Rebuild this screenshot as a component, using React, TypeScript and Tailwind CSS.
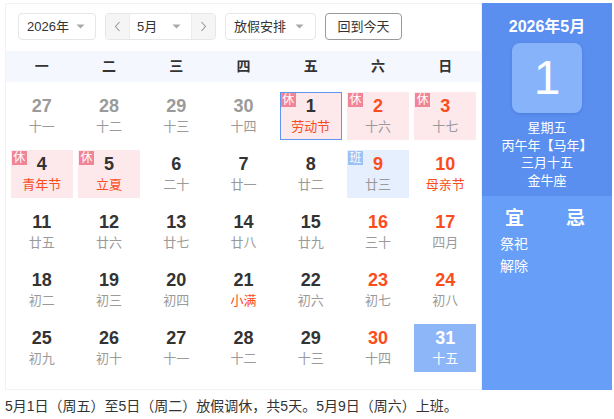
type Day = {
  n: number;
  sub: string;
  muted?: boolean;
  redNum?: boolean;
  redSub?: boolean;
  tag?: '休' | '班';
  selected?: boolean;
  today?: boolean;
};

const rows: Day[][] = [
  [
    { n: 27, sub: '十一', muted: true },
    { n: 28, sub: '十二', muted: true },
    { n: 29, sub: '十三', muted: true },
    { n: 30, sub: '十四', muted: true },
    { n: 1, sub: '劳动节', redSub: true, tag: '休', selected: true },
    { n: 2, sub: '十六', redNum: true, tag: '休' },
    { n: 3, sub: '十七', redNum: true, tag: '休' },
  ],
  [
    { n: 4, sub: '青年节', redSub: true, tag: '休' },
    { n: 5, sub: '立夏', redSub: true, tag: '休' },
    { n: 6, sub: '二十' },
    { n: 7, sub: '廿一' },
    { n: 8, sub: '廿二' },
    { n: 9, sub: '廿三', redNum: true, tag: '班' },
    { n: 10, sub: '母亲节', redNum: true, redSub: true },
  ],
  [
    { n: 11, sub: '廿五' },
    { n: 12, sub: '廿六' },
    { n: 13, sub: '廿七' },
    { n: 14, sub: '廿八' },
    { n: 15, sub: '廿九' },
    { n: 16, sub: '三十', redNum: true },
    { n: 17, sub: '四月', redNum: true },
  ],
  [
    { n: 18, sub: '初二' },
    { n: 19, sub: '初三' },
    { n: 20, sub: '初四' },
    { n: 21, sub: '小满', redSub: true },
    { n: 22, sub: '初六' },
    { n: 23, sub: '初七', redNum: true },
    { n: 24, sub: '初八', redNum: true },
  ],
  [
    { n: 25, sub: '初九' },
    { n: 26, sub: '初十' },
    { n: 27, sub: '十一' },
    { n: 28, sub: '十二' },
    { n: 29, sub: '十三' },
    { n: 30, sub: '十四', redNum: true },
    { n: 31, sub: '十五', today: true },
  ],
];

const weekdays = ['一', '二', '三', '四', '五', '六', '日'];

function Caret() {
  return (
    <svg width="9" height="5" viewBox="0 0 9 5" className="shrink-0">
      <path d="M0.5 0.5 L8.5 0.5 L4.5 4.5 Z" fill="#a8a8a8" />
    </svg>
  );
}

function Chevron({ dir }: { dir: 'l' | 'r' }) {
  return (
    <svg width="7" height="11" viewBox="0 0 7 11">
      <path
        d={dir === 'l' ? 'M5.5 1 L1.5 5.5 L5.5 10' : 'M1.5 1 L5.5 5.5 L1.5 10'}
        fill="none"
        stroke="#9a9a9a"
        strokeWidth="1.1"
      />
    </svg>
  );
}

function Cell({ d }: { d: Day }) {
  const bg = d.today
    ? 'bg-[#8db6f9]'
    : d.tag === '休'
      ? 'bg-[#fde8ec]'
      : d.tag === '班'
        ? 'bg-[#e6effd]'
        : '';
  const border = d.selected ? 'border-[#5f97ef]' : 'border-transparent';
  const numColor = d.today
    ? 'text-white'
    : d.muted
      ? 'text-[#9a9a9a]'
      : d.redNum
        ? 'text-[#fb4d1c]'
        : 'text-[#333333]';
  const subColor = d.today ? 'text-white' : d.redSub ? 'text-[#fb4d1c]' : 'text-[#9a9a9a]';

  return (
    <div className="flex justify-center">
      <div
        className={`relative flex h-[48px] w-[62px] flex-col items-center border pt-[3px] ${bg} ${border}`}
      >
        {d.tag ? (
          <span
            className={`absolute left-0 top-0 flex h-[14px] w-[15px] items-center justify-center text-[12px] leading-[14px] text-white ${
              d.tag === '休' ? 'bg-[#f08597]' : 'bg-[#9cc1f4]'
            }`}
          >
            {d.tag}
          </span>
        ) : null}
        <span className={`text-[18px] font-bold leading-[20px] ${numColor}`}>{d.n}</span>
        <span className={`mt-[3px] text-[13px] leading-[16px] ${subColor}`}>{d.sub}</span>
      </div>
    </div>
  );
}

export default function App() {
  return (
    <div
      className="h-[419px] w-[614px] overflow-hidden bg-white text-[#333333]"
      style={{ fontFamily: '"Liberation Sans", "Noto Sans CJK SC", sans-serif' }}
    >
      <div className="ml-[5px] mt-[3px] flex">
        {/* left: month grid */}
        <div className="flex h-[387px] w-[477px] flex-col border border-[#f0f2f6]">
          <div className="mt-[9px] flex h-[27px] items-stretch gap-[9px] pl-[12px] text-[13px]">
            <div className="flex w-[78px] items-center justify-between rounded-[4px] border border-[#e6e6e6] pl-[8px] pr-[10px]">
              <span>2026年</span>
              <Caret />
            </div>
            <div className="flex w-[111px] rounded-[4px] border border-[#e6e6e6]">
              <div className="flex w-[23px] items-center justify-center rounded-l-[4px] bg-[#f5f5f5]">
                <Chevron dir="l" />
              </div>
              <div className="flex flex-1 items-center justify-between border-x border-[#ececec] pl-[7px] pr-[10px]">
                <span>5月</span>
                <Caret />
              </div>
              <div className="flex w-[23px] items-center justify-center rounded-r-[4px] bg-[#f5f5f5]">
                <Chevron dir="r" />
              </div>
            </div>
            <div className="flex w-[91px] items-center justify-between rounded-[4px] border border-[#e6e6e6] pl-[8px] pr-[11px]">
              <span>放假安排</span>
              <Caret />
            </div>
            <div className="flex w-[77px] items-center justify-center rounded-[4px] border border-[#9a9a9a]">
              回到今天
            </div>
          </div>

          <div className="mt-[11px] grid h-[31px] grid-cols-7 items-center bg-[#f4f7fd] px-[2px] text-[14px] font-bold text-[#333333]">
            {weekdays.map((w) => (
              <span key={w} className="text-center">
                {w}
              </span>
            ))}
          </div>

          <div className="grid grid-cols-7 gap-y-[10px] px-[2px] pt-[10px]">
            {rows.flat().map((d, i) => (
              <Cell key={i} d={d} />
            ))}
          </div>
        </div>

        {/* right: day detail */}
        <div className="flex h-[387px] w-[130px] flex-col text-white">
          <div className="flex h-[193px] flex-col items-center bg-[#5a8eef]">
            <div className="mt-[14px] text-[16px] font-bold leading-[20px]">2026年5月</div>
            <div className="mt-[6px] flex h-[70px] w-[70px] items-center justify-center rounded-[8px] bg-[#86b3fa] text-[48px] font-light leading-none shadow-[0_1px_3px_rgba(40,80,160,0.25)]">
              1
            </div>
            <div className="mt-[6px] flex flex-col items-center text-[13px] leading-[17.7px]">
              <span>星期五</span>
              <span>丙午年【马年】</span>
              <span>三月十五</span>
              <span>金牛座</span>
            </div>
          </div>
          <div className="flex flex-1 flex-col bg-[#679ef7] pl-[18px]">
            <div className="mt-[12px] flex text-[19px] font-bold leading-[22px]">
              <span className="w-[66px] pl-[5px]">宜</span>
              <span>忌</span>
            </div>
            <div className="mt-[3px] flex flex-col text-[14px] leading-[22px]">
              <span>祭祀</span>
              <span>解除</span>
            </div>
          </div>
        </div>
      </div>

      <p className="ml-[5px] mt-[7px] text-[14px] leading-[18px] text-[#333333]">
        5月1日（周五）至5日（周二）放假调休，共5天。5月9日（周六）上班。
      </p>
    </div>
  );
}
